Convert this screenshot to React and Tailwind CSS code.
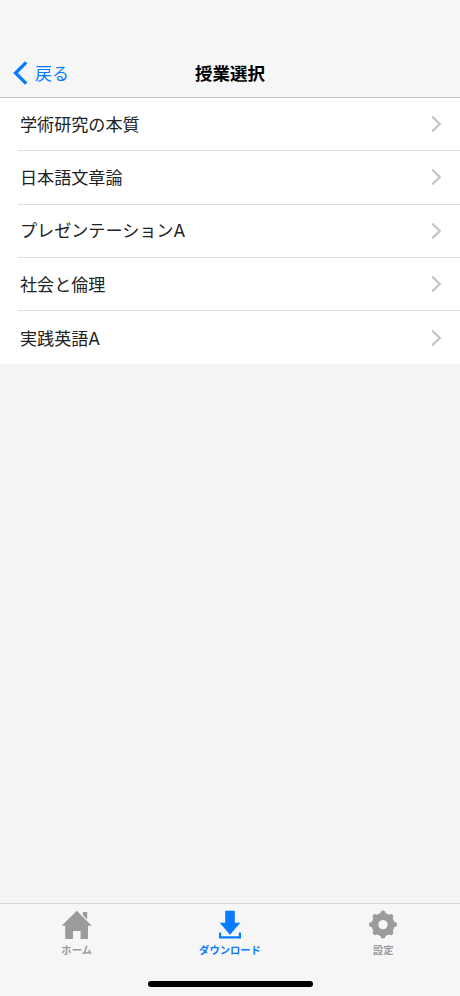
const courses = ['学術研究の本質', '日本語文章論', 'プレゼンテーションA', '社会と倫理', '実践英語A'];

function Chevron() {
  return (
    <svg className="mr-[18px] h-[18px] w-[11px]" viewBox="0 0 11 18" fill="none" stroke="#c5c5c7" strokeWidth="2.2">
      <path d="M1.2 1.6 8.8 9 1.2 16.4" />
    </svg>
  );
}

function HomeIcon() {
  return (
    <svg className="h-[30px] w-8" viewBox="0 0 32 30" fill="currentColor">
      <path d="M15.8.8.7 15.7h3.5V29H12v-8h7.6v8H27V15.7h3.7z" />
      <path d="M21.8 2h4.4v7.4L21.8 5z" />
    </svg>
  );
}

function DownloadIcon() {
  return (
    <svg className="h-[30px] w-8" viewBox="0 0 32 30" fill="currentColor">
      <path d="M11.2.7h9.6v12h5.5L16 24.7 5.7 12.7h5.5z" />
      <path d="M5 22.6h2.2v3.6h17.6v-3.6H27v6H5z" />
    </svg>
  );
}

function GearIcon() {
  return (
    <svg className="h-[30px] w-8" viewBox="0 0 32 30" fill="none" stroke="currentColor">
      <circle cx="16" cy="14.6" r="8.1" strokeWidth="6.8" />
      <g strokeWidth="5" strokeLinecap="round">
        <path d="M16 3.1v3M16 23.1v3M4.5 14.6h3M24.5 14.6h3M8.1 6.7l2 2M21.9 20.5l2 2M23.9 6.7l-2 2M10.1 20.5l-2 2" />
      </g>
    </svg>
  );
}

function Tab({ icon, label, active }) {
  return (
    <button className={`flex flex-1 flex-col items-center ${active ? 'text-[#087cff]' : 'text-[#9b9b9b]'}`}>
      {icon}
      <span className="mt-[3px] text-[10.3px] leading-[15px] font-bold">{label}</span>
    </button>
  );
}

export default function App() {
  return (
    <div className="flex h-[996px] w-[460px] flex-col bg-[#f4f4f4] font-['Inter','Noto_Sans_CJK_JP',sans-serif]">
      <header className="grid h-[98px] grid-cols-3 items-end border-b border-[#c4c4c5] bg-[#f6f6f6] pb-[11px]">
        <button className="flex h-[26px] items-center pl-[13px] text-[17px] text-[#087cff]">
          <svg className="mr-[7px] h-6 w-[15px]" viewBox="0 0 15 24" fill="none" stroke="currentColor" strokeWidth="3.4">
            <path d="M13.2 1.4 2.6 12l10.6 10.6" />
          </svg>
          <span className="pt-px leading-[24px]">戻る</span>
        </button>
        <h1 className="text-center text-[17.5px] leading-[24px] font-bold text-black">授業選択</h1>
      </header>
      <main className="flex-1">
        <ul className="h-[266px] bg-white pl-[18px]">
          {courses.map((course) => (
            <li key={course} className="flex h-[53.3px] items-center justify-between border-b border-[#dedede] pl-[2px] text-[17.1px] text-[#222] last:border-b-0">
              <span className="pt-[1.4px] leading-6">{course}</span>
              <Chevron />
            </li>
          ))}
        </ul>
      </main>
      <footer className="flex h-[93px] flex-col border-t border-[#d5d5d5] bg-[#f6f6f6]">
        <nav className="flex pt-[6px]">
          <Tab icon={<HomeIcon />} label="ホーム" />
          <Tab icon={<DownloadIcon />} label="ダウンロード" active />
          <Tab icon={<GearIcon />} label="設定" />
        </nav>
        <div className="mx-auto mt-auto mb-[9px] h-[6px] w-[165px] rounded-full bg-black" />
      </footer>
    </div>
  );
}
